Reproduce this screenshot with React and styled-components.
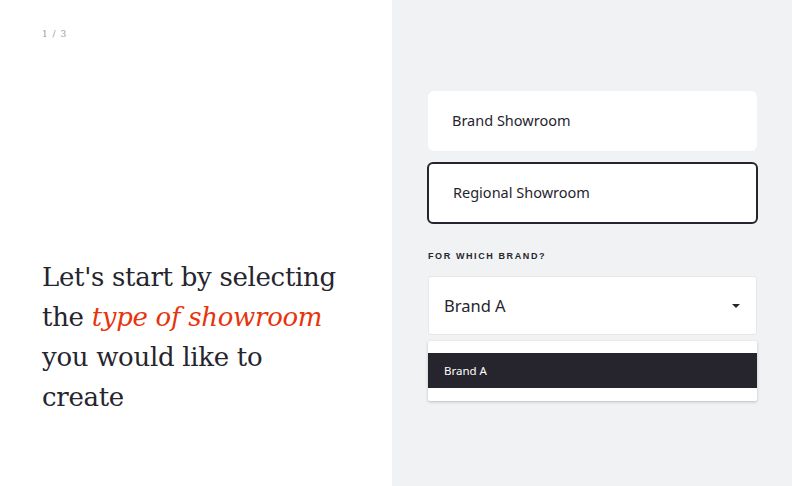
import styled, { createGlobalStyle } from 'styled-components';

const GlobalStyle = createGlobalStyle`
	html, body {
		margin: 0;
		padding: 0;
	}
	body {
		font-family: 'Noto Sans', 'Liberation Sans', sans-serif;
		color: #26252e;
	}
`;

const Page = styled.div`
	display: grid;
	grid-template-columns: 392px 1fr;
	width: 792px;
	height: 486px;
`;

const IntroPanel = styled.section`
	display: flex;
	flex-direction: column;
	justify-content: space-between;
	padding: 29px 42px 69px;
	background: #fff;
`;

const Step = styled.div`
	font-family: 'DejaVu Serif', Georgia, serif;
	font-size: 9px;
	color: #9a9aa2;
	letter-spacing: 1px;
`;

const Heading = styled.h1`
	max-width: 300px;
	margin: 0;
	font-family: 'DejaVu Serif', Georgia, serif;
	font-weight: normal;
	font-size: 26px;
	line-height: 40px;
	letter-spacing: -0.3px;
	color: #26252e;

	em {
		color: #e8340c;
	}
`;

const FormPanel = styled.section`
	display: flex;
	flex-direction: column;
	padding: 91px 35px 0 36px;
	background: #f1f2f4;
`;

const Choices = styled.div`
	display: flex;
	flex-direction: column;
	gap: 11px;
	margin: 0 -1px;
`;

const Choice = styled.button`
	display: flex;
	align-items: center;
	height: ${({ $active }) => ($active ? '62px' : '60px')};
	margin: 0 ${({ $active }) => ($active ? '0' : '1px')};
	padding: 0 ${({ $active }) => ($active ? '24px' : '24px')};
	padding-bottom: 2px;
	background: #fff;
	border: ${({ $active }) => ($active ? '2px solid #26252e' : 'none')};
	border-radius: 6px;
	font-family: 'Noto Sans', sans-serif;
	font-size: 14.5px;
	color: #26252e;
	text-align: left;
`;

const Label = styled.div`
	margin: 27px 0 15px;
	font-family: 'Liberation Sans', sans-serif;
	font-size: 9px;
	font-weight: bold;
	letter-spacing: 1.6px;
	color: #26252e;
`;

const Select = styled.div`
	display: flex;
	align-items: center;
	justify-content: space-between;
	height: 57px;
	padding: 0 16px 0 15px;
	background: #fff;
	border: 1px solid #e6e7ea;
	border-radius: 3px;
	font-size: 16.5px;
	color: #26252e;
`;

const Caret = styled.span`
	width: 0;
	height: 0;
	border-left: 4px solid transparent;
	border-right: 4px solid transparent;
	border-top: 4px solid #26252e;
`;

const Menu = styled.ul`
	list-style: none;
	margin: 6px 0 0;
	padding: 12px 0 13px;
	background: #fff;
	border-radius: 2px;
	box-shadow: 0 1px 3px rgba(38, 37, 46, 0.25);
`;

const Option = styled.li`
	display: flex;
	align-items: center;
	height: 35px;
	padding: 0 16px;
	font-size: 11.5px;
	background: ${({ $selected }) => ($selected ? '#26252e' : '#fff')};
	color: ${({ $selected }) => ($selected ? '#fff' : '#26252e')};
`;

export default function App() {
	return (
		<>
			<GlobalStyle />
			<Page>
				<IntroPanel>
					<Step>1 / 3</Step>
					<Heading>
						Let's start by selecting the <em>type of showroom</em> you would like to create
					</Heading>
				</IntroPanel>
				<FormPanel>
					<Choices>
						<Choice>Brand Showroom</Choice>
						<Choice $active>Regional Showroom</Choice>
					</Choices>
					<Label>FOR WHICH BRAND?</Label>
					<Select>
						Brand A
						<Caret />
					</Select>
					<Menu>
						<Option $selected>Brand A</Option>
					</Menu>
				</FormPanel>
			</Page>
		</>
	);
}
